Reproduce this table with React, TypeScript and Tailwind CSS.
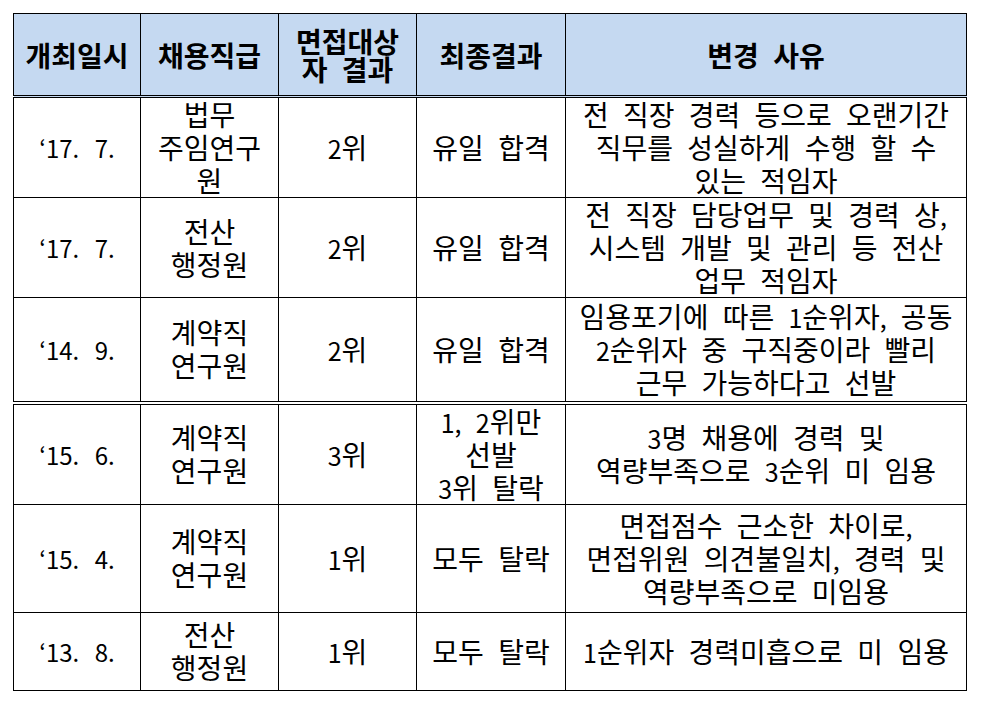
const rows = [
  {
    date: "‘17. 7.",
    job: ["법무", "주임연구", "원"],
    rank: "2위",
    result: ["유일 합격"],
    reason: ["전 직장 경력 등으로 오랜기간", "직무를 성실하게 수행 할 수", "있는 적임자"],
    h: "h-[100px]",
  },
  {
    date: "‘17. 7.",
    job: ["전산", "행정원"],
    rank: "2위",
    result: ["유일 합격"],
    reason: ["전 직장 담당업무 및 경력 상,", "시스템 개발 및 관리 등 전산", "업무 적임자"],
    h: "h-[99px]",
  },
  {
    date: "‘14. 9.",
    job: ["계약직", "연구원"],
    rank: "2위",
    result: ["유일 합격"],
    reason: ["임용포기에 따른 1순위자, 공동", "2순위자 중 구직중이라 빨리", "근무 가능하다고 선발"],
    h: "h-[105px]",
    double: true,
  },
  {
    date: "‘15. 6.",
    job: ["계약직", "연구원"],
    rank: "3위",
    result: ["1, 2위만", "선발", "3위 탈락"],
    reason: ["3명 채용에 경력 및", "역량부족으로 3순위 미 임용"],
    h: "h-[97px]",
  },
  {
    date: "‘15. 4.",
    job: ["계약직", "연구원"],
    rank: "1위",
    result: ["모두 탈락"],
    reason: ["면접점수 근소한 차이로,", "면접위원 의견불일치, 경력 및", "역량부족으로 미임용"],
    h: "h-[108px]",
  },
  {
    date: "‘13. 8.",
    job: ["전산", "행정원"],
    rank: "1위",
    result: ["모두 탈락"],
    reason: ["1순위자 경력미흡으로 미 임용"],
    h: "h-[78px]",
  },
];

// digits and latin punctuation look smaller than hangul in the original font
const Mixed = ({ text }: { text: string }) => (
  <>
    {text.split(/([0-9,.‘]+)/).map((part, i) =>
      /^[0-9,.‘]+$/.test(part) ? (
        <span key={i} className="text-[25px] leading-[20px]">
          {part}
        </span>
      ) : (
        part
      )
    )}
  </>
);

const Lines = ({ lines }: { lines: string[] }) => (
  <>
    {lines.map((l, i) => (
      <div key={i} className="h-[33px] whitespace-pre">
        <Mixed text={l} />
      </div>
    ))}
  </>
);

export default function App() {
  const cell = "border border-black text-center align-middle p-0";
  const head = `${cell} border-b-[3px] border-b-black border-double`;
  return (
    <div className="min-h-[705px] w-[986px] bg-white pl-[13px] pt-[13px] text-black [font-family:'Noto_Sans_CJK_KR','Noto_Sans',sans-serif]">
      <table className="w-[953px] table-fixed border-collapse text-[28px] leading-[33px] [word-spacing:8px]">
        <colgroup>
          <col className="w-[127px]" />
          <col className="w-[138px]" />
          <col className="w-[138px]" />
          <col className="w-[149px]" />
          <col className="w-[401px]" />
        </colgroup>
        <thead>
          <tr className="h-[83px] bg-[#c5d9f1] font-bold leading-[28px]">
            <th className={head}>개최일시</th>
            <th className={head}>채용직급</th>
            <th className={head}>
              <div>면접대상</div>
              <div>자 결과</div>
            </th>
            <th className={head}>최종결과</th>
            <th className={head}>변경 사유</th>
          </tr>
        </thead>
        <tbody>
          {rows.map((r, i) => {
            const b = r.double ? "border-b-[4px] border-b-black border-double" : "";
            return (
              <tr key={i} className={r.h}>
                <td className={`${cell} ${b} text-[24px] [word-spacing:10px]`}>{r.date}</td>
                <td className={`${cell} ${b}`}>
                  <Lines lines={r.job} />
                </td>
                <td className={`${cell} ${b}`}>
                  <Mixed text={r.rank} />
                </td>
                <td className={`${cell} ${b}`}>
                  <Lines lines={r.result} />
                </td>
                <td className={`${cell} ${b}`}>
                  <Lines lines={r.reason} />
                </td>
              </tr>
            );
          })}
        </tbody>
      </table>
    </div>
  );
}
